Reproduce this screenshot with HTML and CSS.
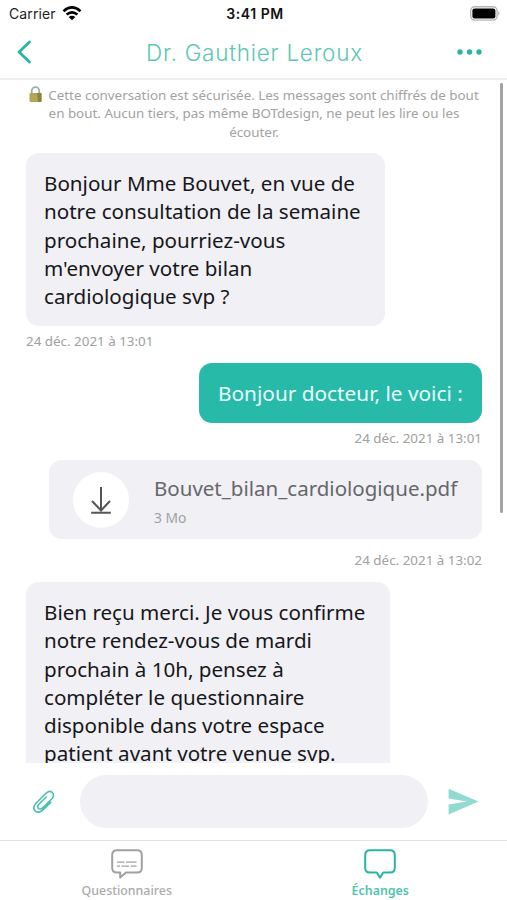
FILE: index.html
```html
<!DOCTYPE html>
<html lang="fr">
<head>
<meta charset="utf-8">
<title>Messagerie</title>
<link rel="stylesheet" href="styles.css">
</head>
<body>
<div class="app">
  <div class="status">
    <div class="carrier"><span>Carrier</span>
      <svg width="20" height="15" viewBox="0 0 20 15"><g fill="none" stroke="#000" stroke-width="2.6"><path d="M1.5 5.2Q10-2.3 18.5 5.2"/><path d="M4.6 8.6Q10 4 15.4 8.6"/></g><path d="M6.7 11Q10 8.3 13.3 11L10 14.3Z"/></svg>
    </div>
    <div class="clock">3:41 PM</div>
    <div class="battery"><svg width="31" height="15" viewBox="0 0 31 15"><rect x=".7" y=".7" width="26.4" height="13.4" rx="4" fill="#fff" stroke="#b5b5b5" stroke-width="1.4"/><rect x="2.4" y="2.4" width="23" height="10" rx="2.2"/><path d="M28.3 5Q30.5 7.3 28.3 9.6Z" fill="#aaa"/></svg></div>
  </div>
  <header class="header">
    <svg class="back" width="16" height="24" viewBox="0 0 16 24"><path d="M13.5 2L3 12L13.5 22" fill="none" stroke="#28b5a1" stroke-width="2.8" stroke-linecap="round" stroke-linejoin="round"/></svg>
    <h1>Dr. Gauthier Leroux</h1>
    <svg class="more" width="26" height="6" viewBox="0 0 26 6" fill="#28b5a1"><circle cx="3" cy="3" r="2.7"/><circle cx="12.5" cy="3" r="2.7"/><circle cx="22" cy="3" r="2.7"/></svg>
  </header>
  <main class="chat">
    <p class="notice"><svg class="lock" width="13" height="17" viewBox="0 0 13 17"><path d="M2.7 8V5a3.8 3.8 0 0 1 7.6 0v3" fill="none" stroke="#a3a9a5" stroke-width="1.8"/><rect x=".5" y="7" width="12" height="9" rx="1" fill="#b5a557"/><path d="M8 7h3.5a1 1 0 0 1 1 1v7a1 1 0 0 1-1 1H9Z" fill="#8e8138"/></svg><span>Cette conversation est sécurisée. Les messages sont chiffrés de bout</span><br><span>en bout. Aucun tiers, pas même BOTdesign, ne peut les lire ou les</span><br><span>écouter.</span></p>
    <div class="bubble first">Bonjour Mme Bouvet, en vue de<br>notre consultation de la semaine<br>prochaine, pourriez-vous<br>m'envoyer votre bilan<br>cardiologique svp ?</div>
    <time class="date d1">24 déc. 2021 à 13:01</time>
    <div class="bubble mine">Bonjour docteur, le voici :</div>
    <time class="date right d2">24 déc. 2021 à 13:01</time>
    <div class="file">
      <div class="disc"><svg width="22" height="30" viewBox="0 0 22 30" fill="none" stroke="#555" stroke-width="2"><path d="M11 2V26M2 16L11 25.5L20 16M1.2 27.8H20.8"/></svg></div>
      <div class="meta"><div class="name">Bouvet_bilan_cardiologique.pdf</div><div class="size">3 Mo</div></div>
    </div>
    <time class="date right d3">24 déc. 2021 à 13:02</time>
    <div class="bubble last">Bien reçu merci. Je vous confirme<br>notre rendez-vous de mardi<br>prochain à 10h, pensez à<br>compléter le questionnaire<br>disponible dans votre espace<br>patient avant votre venue svp.</div>
    <div class="scrollbar"></div>
  </main>
  <div class="composer">
    <svg class="clip" width="24" height="26" viewBox="0 0 24 26"><path d="M18.7 13.4L11.2 20.6C8.7 23 5.4 24.4 3.2 22C1 19.5 1.8 16.5 4.2 14L13.5 4.8C15.7 2.6 18.3 1.6 20.3 3.5C22.2 5.4 21.7 8 19.7 10L11 18.6C9.5 20.1 7.6 20.6 6.3 19.3C5.1 18 5.7 16.4 7.1 15L14.2 8" fill="none" stroke="#45c1ae" stroke-width="1.6" stroke-linecap="round"/></svg>
    <div class="input"></div>
    <svg class="send" width="31" height="27" viewBox="0 0 31 27"><path d="M.6.7L30.5 13.5L.6 26.5V16.5L19 13.5L.6 10.6Z" fill="#91dacf"/></svg>
  </div>
  <nav class="tabs">
    <div class="tab"><svg width="32" height="30" viewBox="0 0 32 30" fill="none" stroke="#a1a1a1"><path d="M6 1.2H26Q30.8 1.2 30.8 6V19Q30.8 23.5 26 23.5H15L9.2 28.6V23.5H6Q1.2 23.5 1.2 19V6Q1.2 1.2 6 1.2Z" stroke-width="2" stroke-linejoin="round"/><path d="M6 13.2H13.5M15 13.2H25.5M6 17.2H9M10.5 17.2H18M19.5 17.2H25.5" stroke-width="1.3"/></svg><span>Questionnaires</span></div>
    <div class="tab active"><svg width="32" height="30" viewBox="0 0 32 30" fill="none" stroke="#28b5a1"><path d="M6 1.2H26Q30.8 1.2 30.8 6V19Q30.8 23.5 26 23.5H19.2L16 28.6L12.8 23.5H6Q1.2 23.5 1.2 19V6Q1.2 1.2 6 1.2Z" stroke-width="2" stroke-linejoin="round"/></svg><span>Échanges</span></div>
  </nav>
</div>
</body>
</html>
```
FILE: styles.css
```css
* { box-sizing: border-box; }
body { margin: 0; background: #fff; font-family: "Noto Sans", sans-serif; }
svg { display: block; flex: none; }
.app { width: 507px; height: 900px; display: flex; flex-direction: column; overflow: hidden; white-space: nowrap; }
.status { height: 27px; display: grid; grid-template-columns: 1fr 1fr 1fr; align-items: center; padding: 0 6px 0 9px; font: 14px Inter, sans-serif; color: #222; }
.carrier { display: flex; align-items: center; gap: 6px; letter-spacing: 0.1px; }
.clock { text-align: center; font-weight: 600; color: #111; letter-spacing: 0.55px; }
.battery { justify-self: end; }
.header { height: 53px; display: flex; align-items: center; justify-content: space-between; padding: 0 24px 1px 16px; border-bottom: 2px solid #efefef; }
.header h1 { margin: 0 0 0 20px; font: 300 22.5px Inter, sans-serif; color: #5bc6b3; letter-spacing: 0.75px; }
.chat { position: relative; height: 683px; flex: none; overflow: hidden; display: flex; flex-direction: column; align-items: flex-start; padding: 6px 25px 0 26px; }
.notice { flex: none; margin: 0; align-self: stretch; text-align: center; font-size: 13.4px; line-height: 18.3px; color: #a2a2a2; height: 67px; }
.lock { display: inline-block; vertical-align: -3px; margin-right: 6px; }
.bubble { flex: none; background: #f0f0f5; color: #17171a; border-radius: 13px; font-size: 20.6px; line-height: 28.3px; padding: 16px 18px; }
.first { width: 359px; height: 173px; }
.date { flex: none; font-size: 13.4px; line-height: 18px; color: #a0a0a0; }
.d1 { margin: 6px 0 13px; }
.mine { align-self: flex-end; width: 283px; height: 60px; background: #27baa8; color: #e9fffb; font-size: 20.8px; padding-left: 19px; }
.right { align-self: flex-end; }
.d2 { margin: 6px 0 13px; }
.file { flex: none; align-self: flex-end; display: flex; width: 433px; height: 79px; background: #f0f0f5; border-radius: 13px; padding: 12px 24px; gap: 25px; }
.disc { flex: none; width: 56px; height: 56px; border-radius: 50%; background: #fff; display: flex; align-items: center; justify-content: center; }
.name { font-size: 20.5px; line-height: 28px; color: #66666b; margin-top: 2px; }
.size { font-size: 13.8px; line-height: 18px; color: #a0a0a5; margin-top: 7px; }
.d3 { margin: 12px 0 13px; }
.last { width: 364px; height: 220px; }
.scrollbar { position: absolute; right: 4px; top: 3px; width: 3px; height: 430px; border-radius: 2px; background: #a3a3a3; }
.composer { height: 77px; flex: none; display: flex; align-items: center; padding: 0 28px 0 32px; }
.input { width: 348px; height: 53px; border-radius: 27px; background: #f0f0f5; margin: 0 20px 0 24px; }
.tabs { height: 60px; flex: none; display: grid; grid-template-columns: 1fr 1fr; border-top: 1px solid #e2e2e2; }
.tab { display: flex; flex-direction: column; align-items: center; padding-top: 8px; font-size: 12.4px; line-height: 17px; color: #ababab; font-weight: 500; }
.tab span { margin-top: 3px; }
.active { color: #50c3b1; font-weight: 600; }
```
